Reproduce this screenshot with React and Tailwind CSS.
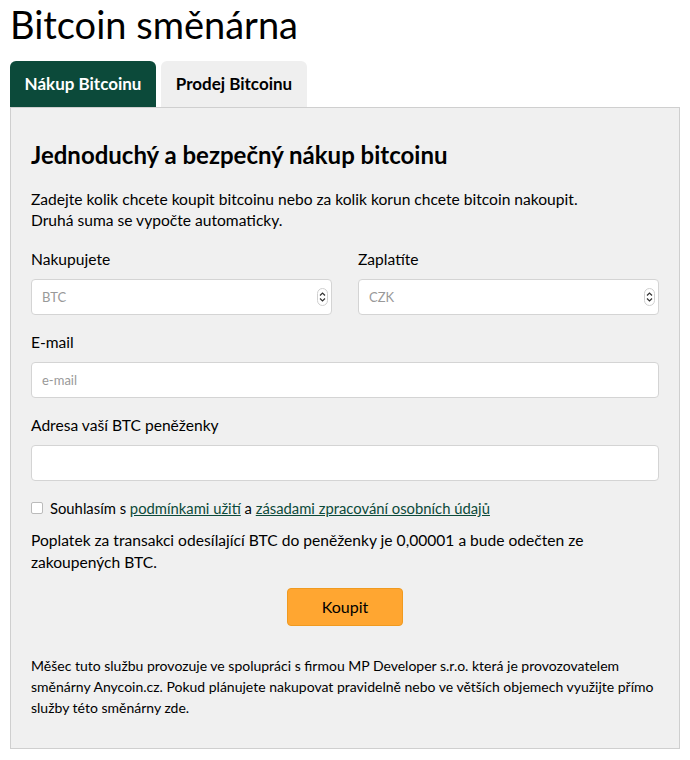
import React, { useState } from "react";

const font = { fontFamily: "Lato, 'Noto Sans', sans-serif" };

function Field({ label, placeholder, number, className = "" }) {
    return (
        <div className={"flex flex-col " + className}>
            <label className="text-[15.6px] leading-5 text-black mb-[10px]">{label}</label>
            <div className="relative">
                <input
                    type="text"
                    placeholder={placeholder}
                    className="w-full h-[36px] rounded-[4px] border border-[#d4d4d4] bg-white px-[10px] text-[13px] placeholder:text-[#999] outline-none"
                />
                {number && (
                    <span className="absolute right-[4px] top-1/2 -translate-y-1/2 flex flex-col items-center justify-center w-[11px] h-[18px] rounded-full border border-[#cfcfcf] bg-white">
                        <svg width="7" height="14" viewBox="0 0 7 14" fill="none" stroke="#333" strokeWidth="1.2">
                            <path d="M1 5.5 L3.5 3 L6 5.5" />
                            <path d="M1 8.5 L3.5 11 L6 8.5" />
                        </svg>
                    </span>
                )}
            </div>
        </div>
    );
}

export default function App() {
    const [tab, setTab] = useState(0);

    return (
        <div className="w-[690px] bg-white px-[10px] pb-[10px]" style={font}>
            <h1 className="text-[38px] leading-[46px] text-black pt-[1px]">Bitcoin směnárna</h1>
            <div className="flex gap-[5px] mt-[14px]">
                <button
                    onClick={() => setTab(0)}
                    className={"w-[146px] h-[46px] rounded-t-[6px] text-[17px] font-bold " + (tab === 0 ? "bg-[#0c4a3a] text-white" : "bg-[#efefef] text-black")}
                >
                    Nákup Bitcoinu
                </button>
                <button
                    onClick={() => setTab(1)}
                    className={"w-[146px] h-[46px] rounded-t-[6px] text-[17px] font-bold " + (tab === 1 ? "bg-[#0c4a3a] text-white" : "bg-[#efefef] text-black")}
                >
                    Prodej Bitcoinu
                </button>
            </div>
            <div className="border border-[#cfcfcf] bg-[#f0f0f0] px-[20px] pt-[32px] pb-[30px]">
                <h2 className="text-[24px] leading-[30px] font-bold text-black">Jednoduchý a bezpečný nákup bitcoinu</h2>
                <p className="mt-[19px] text-[15.6px] leading-[21px] text-black">
                    Zadejte kolik chcete koupit bitcoinu nebo za kolik korun chcete bitcoin nakoupit.
                    <br />
                    Druhá suma se vypočte automaticky.
                </p>
                <div className="grid grid-cols-2 gap-[26px] mt-[18px]">
                    <Field label="Nakupujete" placeholder="BTC" number />
                    <Field label="Zaplatíte" placeholder="CZK" number />
                </div>
                <Field label="E-mail" placeholder="e-mail" className="mt-[17px]" />
                <Field label="Adresa vaší BTC peněženky" placeholder="" className="mt-[17px]" />
                <label className="flex items-center gap-[7px] mt-[17px] text-[14.8px] leading-5 text-black">
                    <input type="checkbox" className="w-[12px] h-[12px] appearance-none rounded-[2px] border border-[#bbb] bg-white" />
                    <span>
                        Souhlasím s{" "}
                        <a href="#" className="text-[#0c4a3a] underline">podmínkami užití</a>
                        {" "}a{" "}
                        <a href="#" className="text-[#0c4a3a] underline">zásadami zpracování osobních údajů</a>
                    </span>
                </label>
                <p className="mt-[11px] text-[15.6px] leading-[22px] text-black">
                    Poplatek za transakci odesílající BTC do peněženky je 0,00001 a bude odečten ze zakoupených BTC.
                </p>
                <div className="flex justify-center mt-[15px]">
                    <button className="w-[116px] h-[38px] rounded-[4px] bg-[#ffa631] border border-[#f09a20] text-[16px] text-black">
                        Koupit
                    </button>
                </div>
                <p className="mt-[29px] text-[14px] leading-[21px] text-black">
                    Měšec tuto službu provozuje ve spolupráci s firmou MP Developer s.r.o. která je provozovatelem směnárny Anycoin.cz. Pokud plánujete nakupovat pravidelně nebo ve větších objemech využijte přímo služby této směnárny zde.
                </p>
            </div>
        </div>
    );
}
